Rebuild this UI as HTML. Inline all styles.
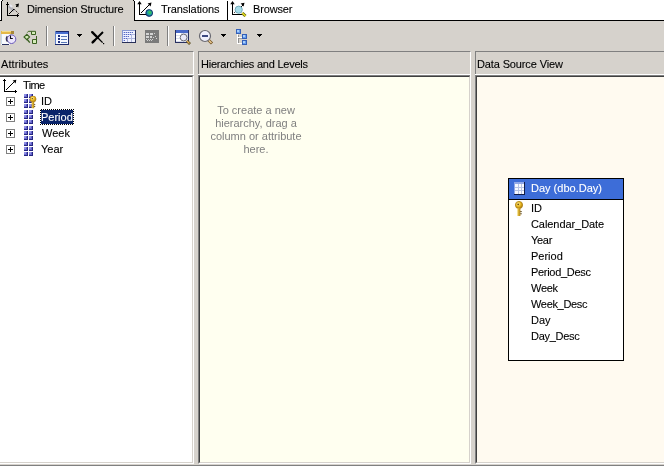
<!DOCTYPE html>
<html><head><meta charset="utf-8">
<style>
*{margin:0;padding:0;box-sizing:border-box}
html,body{width:664px;height:466px;overflow:hidden;background:#d6d2cc;font-family:"Liberation Sans",sans-serif;font-size:11px;color:#000}
.a{position:absolute}
.t{position:absolute;white-space:nowrap;line-height:16px;height:16px;will-change:transform;-webkit-text-stroke:0.1px currentColor}
svg{position:absolute;overflow:visible}
</style></head><body>
<!-- tab strip -->
<div class="a" style="left:0;top:0;width:664px;height:20px;background:#fff"></div>
<div class="a" style="left:0;top:20px;width:664px;height:1px;background:#000"></div>
<div class="a" style="left:1px;top:0;width:133px;height:21px;background:#d6d2cc;border-left:1px solid #000"></div>
<div class="a" style="left:1px;top:0;width:1px;height:1px;background:#fff"></div><div class="a" style="left:2px;top:0;width:1px;height:1px;background:#000"></div>
<div class="a" style="left:133px;top:0;width:1px;height:1px;background:#000"></div>
<div class="a" style="left:134px;top:1px;width:1px;height:20px;background:#000"></div>
<div class="a" style="left:227px;top:1px;width:1px;height:20px;background:#000"></div>
<div class="t" style="left:27px;top:1px;letter-spacing:-0.17px">Dimension Structure</div>
<div class="t" style="left:161px;top:1px;letter-spacing:-0.09px">Translations</div>
<div class="t" style="left:253px;top:1px;letter-spacing:-0.15px">Browser</div>

<!-- toolbar -->
<div class="a" style="left:0;top:21px;width:664px;height:30px;background:#d6d2cc"></div>
<div class="a" style="left:46px;top:26px;width:1px;height:20px;background:#808080;box-shadow:1px 0 0 #fff"></div>
<div class="a" style="left:113px;top:26px;width:1px;height:20px;background:#808080;box-shadow:1px 0 0 #fff"></div>
<div class="a" style="left:167px;top:26px;width:1px;height:20px;background:#808080;box-shadow:1px 0 0 #fff"></div>

<!-- panels -->
<!-- Attributes -->
<div class="a" style="left:-2px;top:51px;width:196px;height:413px;border-top:1px solid #808080;border-right:1px solid #fff;background:#d6d2cc"></div>
<div class="t" style="left:1px;top:56px;letter-spacing:0.1px">Attributes</div>
<div class="a" style="left:-2px;top:74px;width:195px;height:1px;background:#fff"></div>
<div class="a" style="left:-2px;top:75px;width:196px;height:389px;border-top:1px solid #808080;border-bottom:1px solid #fff;border-right:1px solid #fff;background:#d6d2cc"></div>
<div class="a" style="left:-2px;top:76px;width:195px;height:387px;border-top:1px solid #404040;border-bottom:1px solid #d6d2cc;border-right:1px solid #d6d2cc;background:#fff"></div>

<!-- Hierarchies -->
<div class="a" style="left:198px;top:51px;width:273px;height:413px;border-top:1px solid #808080;border-left:1px solid #808080;border-right:1px solid #fff;background:#d6d2cc"></div>
<div class="t" style="left:201px;top:56px;letter-spacing:-0.23px">Hierarchies and Levels</div>
<div class="a" style="left:198px;top:74px;width:272px;height:1px;background:#fff"></div>
<div class="a" style="left:198px;top:75px;width:272px;height:389px;border-top:1px solid #808080;border-left:1px solid #808080;border-bottom:1px solid #fff;background:#d6d2cc"></div>
<div class="a" style="left:199px;top:76px;width:271px;height:387px;border-top:1px solid #404040;border-left:1px solid #404040;border-bottom:1px solid #d6d2cc;border-right:1px solid #d6d2cc;background:#fffff0"></div>

<!-- DSV -->
<div class="a" style="left:475px;top:51px;width:200px;height:413px;border-top:1px solid #808080;border-left:1px solid #808080;background:#d6d2cc"></div>
<div class="t" style="left:477px;top:56px;letter-spacing:-0.13px">Data Source View</div>
<div class="a" style="left:475px;top:74px;width:200px;height:1px;background:#fff"></div>
<div class="a" style="left:475px;top:75px;width:200px;height:389px;border-top:1px solid #808080;border-left:1px solid #808080;border-bottom:1px solid #fff;background:#d6d2cc"></div>
<div class="a" style="left:476px;top:76px;width:200px;height:387px;border-top:1px solid #404040;border-left:1px solid #404040;border-bottom:1px solid #d6d2cc;background:#fffaf0"></div>

<div class="a" style="left:0;top:464px;width:664px;height:1px;background:#d6d2cc"></div>
<div class="a" style="left:0;top:465px;width:664px;height:1px;background:#808080"></div>
<!-- attributes tree -->
<div class="t" style="left:23px;top:77px;letter-spacing:-0.6px">Time</div>
<div class="t" style="left:41px;top:93px">ID</div>
<div class="a" style="left:40px;top:109px;width:34px;height:16px;background:repeating-conic-gradient(#000 0 25%,#fff 0 50%) 0 0/2px 2px"></div><div class="a" style="left:41px;top:110px;width:32px;height:14px;background:#0a246a"></div>
<div class="t" style="left:41px;top:109px;color:#fff">Period</div>
<div class="t" style="left:42px;top:125px">Week</div>
<div class="t" style="left:41px;top:141px">Year</div>

<!-- hint -->
<div class="a" style="left:206px;top:104px;width:100px;text-align:center;line-height:13px;color:#808080;will-change:transform">To create a new hierarchy, drag a column or attribute here.</div>

<!-- DSV table -->
<div class="a" style="left:508px;top:178px;width:116px;height:183px;border:1px solid #000;background:#fff"></div>
<div class="a" style="left:509px;top:179px;width:114px;height:21px;background:#3d6dd8;border-bottom:1px solid #000"></div>
<div class="t" style="left:531px;top:180px;color:#fff">Day (dbo.Day)</div>
<div class="t" style="left:531px;top:200px">ID</div>
<div class="t" style="left:531px;top:216px;letter-spacing:-0.07px">Calendar_Date</div>
<div class="t" style="left:531px;top:232px;letter-spacing:-0.3px">Year</div>
<div class="t" style="left:531px;top:248px">Period</div>
<div class="t" style="left:531px;top:264px;letter-spacing:-0.3px">Period_Desc</div>
<div class="t" style="left:531px;top:280px;letter-spacing:-0.3px">Week</div>
<div class="t" style="left:531px;top:296px;letter-spacing:-0.33px">Week_Desc</div>
<div class="t" style="left:531px;top:312px">Day</div>
<div class="t" style="left:531px;top:328px;letter-spacing:-0.28px">Day_Desc</div>
<svg class="a" style="left:0;top:0" width="664" height="466" viewBox="0 0 664 466">
<defs>
<linearGradient id="sq" x1="0" y1="0" x2="1" y2="1"><stop offset="0" stop-color="#a0a0f0"/><stop offset="0.5" stop-color="#5858c8"/><stop offset="1" stop-color="#2c2c90"/></linearGradient>
<radialGradient id="gold" cx="0.4" cy="0.35" r="0.7"><stop offset="0" stop-color="#fff0a0"/><stop offset="0.5" stop-color="#e8b820"/><stop offset="1" stop-color="#a07010"/></radialGradient>
<linearGradient id="goldl" x1="0" y1="0" x2="1" y2="0"><stop offset="0" stop-color="#f0d050"/><stop offset="1" stop-color="#b08010"/></linearGradient>
<radialGradient id="globe" cx="0.6" cy="0.4" r="0.7"><stop offset="0" stop-color="#40d040"/><stop offset="0.5" stop-color="#20a0a0"/><stop offset="1" stop-color="#104080"/></radialGradient>
<linearGradient id="hsq" x1="0" y1="0" x2="1" y2="1"><stop offset="0" stop-color="#c0e0ff"/><stop offset="0.5" stop-color="#6898e8"/><stop offset="1" stop-color="#2850b0"/></linearGradient>
<symbol id="attr" viewBox="0 0 9 14" shape-rendering="crispEdges"><rect x="0" y="0" width="4" height="4" fill="#262680"/><rect x="0" y="0" width="3" height="3" fill="#6a6ad0"/><rect x="0" y="0" width="2" height="2" fill="#9090e4"/><rect x="2" y="1" width="1" height="1" fill="#5858c0"/><rect x="5" y="0" width="4" height="4" fill="#262680"/><rect x="5" y="0" width="3" height="3" fill="#6a6ad0"/><rect x="5" y="0" width="2" height="2" fill="#9090e4"/><rect x="7" y="1" width="1" height="1" fill="#5858c0"/><rect x="0" y="5" width="4" height="4" fill="#262680"/><rect x="0" y="5" width="3" height="3" fill="#6a6ad0"/><rect x="0" y="5" width="2" height="2" fill="#9090e4"/><rect x="2" y="6" width="1" height="1" fill="#5858c0"/><rect x="5" y="5" width="4" height="4" fill="#262680"/><rect x="5" y="5" width="3" height="3" fill="#6a6ad0"/><rect x="5" y="5" width="2" height="2" fill="#9090e4"/><rect x="7" y="6" width="1" height="1" fill="#5858c0"/><rect x="0" y="10" width="4" height="4" fill="#262680"/><rect x="0" y="10" width="3" height="3" fill="#6a6ad0"/><rect x="0" y="10" width="2" height="2" fill="#9090e4"/><rect x="2" y="11" width="1" height="1" fill="#5858c0"/><rect x="5" y="10" width="4" height="4" fill="#262680"/><rect x="5" y="10" width="3" height="3" fill="#6a6ad0"/><rect x="5" y="10" width="2" height="2" fill="#9090e4"/><rect x="7" y="11" width="1" height="1" fill="#5858c0"/></symbol>
<symbol id="plus" viewBox="0 0 9 9"><rect x="0.5" y="0.5" width="8" height="8" fill="#fff" stroke="#808080"/><rect x="2" y="4" width="5" height="1" fill="#000"/><rect x="4" y="2" width="1" height="5" fill="#000"/></symbol>
<symbol id="key" viewBox="0 0 10 16"><circle cx="5" cy="4" r="3.6" fill="url(#gold)" stroke="#b08010" stroke-width="0.8"/><circle cx="4.2" cy="3.4" r="0.8" fill="#604000"/><path d="M3.4 7.2 L6.4 7.2 L6.4 15 L3.4 15 Z" fill="url(#goldl)"/><rect x="6.4" y="10" width="1.2" height="1.1" fill="#483000"/><rect x="6.4" y="12.2" width="1.2" height="1.1" fill="#483000"/></symbol>
</defs>

<!-- tab icon 1: dimension structure -->
<g shape-rendering="crispEdges">
<rect x="7" y="2" width="1" height="14" fill="#000"/>
<rect x="6" y="4" width="3" height="1" fill="#000"/>
<rect x="7" y="15" width="12" height="1" fill="#000"/>
<rect x="17" y="14" width="1" height="3" fill="#000"/>
</g>
<path d="M9 6 L14 11" stroke="#b0b0b8" stroke-width="2.5"/>
<path d="M10 5 L12 7" stroke="#e8e8f0" stroke-width="2"/>
<g fill="#000" shape-rendering="crispEdges"><rect x="9" y="13" width="1" height="1"/><rect x="10" y="12" width="1" height="1"/><rect x="11" y="11" width="1" height="1"/><rect x="12" y="10" width="1" height="1"/><rect x="13" y="9" width="1" height="1"/></g>
<g fill="#484040" shape-rendering="crispEdges"><rect x="14" y="9" width="1" height="1"/><rect x="16" y="11" width="1" height="1"/><rect x="18" y="13" width="1" height="1"/></g><g fill="#a09890" shape-rendering="crispEdges"><rect x="15" y="10" width="1" height="1"/><rect x="17" y="12" width="1" height="1"/></g>
<path d="M19 3.6 L15.3 4.6 L18.2 7.5 Z" fill="#000"/>
<rect x="16" y="6" width="1" height="1" fill="#000" shape-rendering="crispEdges"/>

<!-- tab icon 2: translations -->
<g shape-rendering="crispEdges">
<rect x="139" y="3" width="1" height="12" fill="#000"/>
<rect x="139" y="14" width="7" height="1" fill="#000"/>
</g>
<path d="M139.5 1 L137.3 4.2 L141.7 4.2 Z" fill="#000"/>
<g fill="#000" shape-rendering="crispEdges"><rect x="141" y="12" width="1" height="1"/><rect x="142" y="11" width="1" height="1"/><rect x="143" y="10" width="1" height="1"/><rect x="144" y="9" width="1" height="1"/><rect x="145" y="8" width="1" height="1"/><rect x="146" y="7" width="1" height="1"/><rect x="147" y="6" width="1" height="1"/><rect x="148" y="5" width="1" height="1"/></g>
<path d="M151.5 2.5 L147.6 3.4 L150.6 6.4 Z" fill="#000"/>
<circle cx="149.2" cy="13" r="3.4" fill="url(#globe)" stroke="#0c2c6c" stroke-width="0.9"/>

<!-- tab icon 3: browser -->
<g shape-rendering="crispEdges">
<rect x="232" y="3" width="1" height="12" fill="#000"/>
<rect x="232" y="14" width="10" height="1" fill="#000"/>
</g>
<path d="M232.5 1 L230.3 4.2 L234.7 4.2 Z" fill="#000"/>
<path d="M234 13 L236 11" stroke="#000" stroke-width="1" stroke-dasharray="1 1"/>
<path d="M244.5 2.8 L240.6 3.6 L243.6 6.6 Z" fill="#000"/>
<path d="M242.3 13 L245.5 16" stroke="#606000" stroke-width="3"/>
<path d="M242.3 13 L245.5 16" stroke="#e8e020" stroke-width="1.5"/>
<path d="M241 7 L243 5" stroke="#000" stroke-width="1"/>
<circle cx="238.7" cy="9.7" r="3.6" fill="#a8dce8" stroke="#6ca4b4" stroke-width="0.9"/>

<!-- toolbar icon: calendar+clock -->
<g shape-rendering="crispEdges">
<rect x="1" y="31" width="13" height="3" fill="#e4b848"/>
<rect x="2" y="31" width="9" height="1" fill="#f4dc88"/>
<rect x="11" y="31" width="3" height="3" fill="#a88838"/>
<rect x="1" y="34" width="9" height="11" fill="#f8fafc"/>
<rect x="1" y="34" width="1" height="10" fill="#c8d8e8"/>
<rect x="2" y="44" width="7" height="1" fill="#283060"/>
</g>
<circle cx="11.5" cy="39.2" r="4.3" fill="#ece6fc" stroke="#6858b8" stroke-width="1"/>
<path d="M7.3 36.2 A4.3 4.3 0 0 0 7.4 41.6" stroke="#383850" stroke-width="1.2" fill="none"/>
<path d="M10.5 35.5 V38.5 H12.8" stroke="#101018" stroke-width="1.1" fill="none"/>
<!-- toolbar icon: refresh green -->
<g stroke="#3a6020" stroke-width="1">
<path d="M27.3 32.6 L28.4 31.3 H35.5 V34.5 H31.5 V31.5" fill="#d4ecb8"/>
<path d="M26.8 34.3 L24 37 L26.8 39.7 L29.6 37 Z" fill="#d4ecb8" stroke-width="1.1"/>
<path d="M26.8 39 L29.8 42.6" stroke-width="1.4" fill="none"/>
<path d="M36.5 36 V43.5 H32.5 V39.5 H36.5" fill="#d4ecb8"/>
</g>
<!-- list icon -->
<g shape-rendering="crispEdges">
<rect x="55" y="31" width="14" height="14" fill="#1c2a6c"/>
<rect x="55" y="31" width="1" height="13" fill="#6080c8"/>
<rect x="56" y="32" width="12" height="2" fill="#4a70d0"/>
<rect x="56" y="34" width="12" height="10" fill="#f4f8ff"/>
<rect x="58" y="35" width="2" height="2" fill="#203080"/>
<rect x="58" y="38" width="2" height="2" fill="#203080"/>
<rect x="58" y="41" width="2" height="2" fill="#203080"/>
<rect x="61" y="36" width="6" height="1" fill="#5878b8"/>
<rect x="61" y="39" width="6" height="1" fill="#5878b8"/>
<rect x="61" y="42" width="6" height="1" fill="#5878b8"/>
</g>
<!-- dropdown arrows -->
<g shape-rendering="crispEdges" fill="#000">
<rect x="77" y="34" width="5" height="1"/><rect x="78" y="35" width="3" height="1"/><rect x="79" y="36" width="1" height="1"/>
<rect x="221" y="34" width="5" height="1"/><rect x="222" y="35" width="3" height="1"/><rect x="223" y="36" width="1" height="1"/>
<rect x="257" y="34" width="5" height="1"/><rect x="258" y="35" width="3" height="1"/><rect x="259" y="36" width="1" height="1"/>
</g>
<!-- X delete -->
<path d="M92.2 32.2 L98 38" stroke="#000" stroke-width="2.4" stroke-linecap="round"/>
<path d="M98 38 L102.6 42.6" stroke="#000" stroke-width="1.3"/>
<rect x="103" y="43" width="1.2" height="1.2" fill="#000"/>
<path d="M103 32 L93 42" stroke="#000" stroke-width="1.9"/>
<path d="M94.5 40.5 L92.6 42.4" stroke="#000" stroke-width="2.4" stroke-linecap="round"/>
<!-- grid icon (blue) -->
<g shape-rendering="crispEdges">
<rect x="122" y="30" width="14" height="13" fill="#283058"/>
<rect x="122" y="30" width="13" height="12" fill="#8898d0"/>
<rect x="123" y="31" width="12" height="11" fill="#f0f2ff"/>
<rect x="123" y="32" width="1" height="1" fill="#b8c4f0"/>
<rect x="124" y="32" width="1" height="1" fill="#5868c0"/>
<rect x="125" y="32" width="1" height="1" fill="#b8c4f0"/>
<rect x="126" y="32" width="1" height="1" fill="#5868c0"/>
<rect x="127" y="32" width="1" height="1" fill="#b8c4f0"/>
<rect x="128" y="32" width="1" height="1" fill="#5868c0"/>
<rect x="129" y="32" width="1" height="1" fill="#b8c4f0"/>
<rect x="130" y="32" width="1" height="1" fill="#5868c0"/>
<rect x="131" y="32" width="1" height="1" fill="#b8c4f0"/>
<rect x="132" y="32" width="1" height="1" fill="#5868c0"/>
<rect x="123" y="34" width="1" height="1" fill="#b8c4f0"/>
<rect x="124" y="34" width="1" height="1" fill="#5868c0"/>
<rect x="125" y="34" width="1" height="1" fill="#b8c4f0"/>
<rect x="126" y="34" width="1" height="1" fill="#5868c0"/>
<rect x="127" y="34" width="1" height="1" fill="#b8c4f0"/>
<rect x="128" y="34" width="1" height="1" fill="#5868c0"/>
<rect x="129" y="34" width="1" height="1" fill="#b8c4f0"/>
<rect x="130" y="34" width="1" height="1" fill="#5868c0"/>
<rect x="131" y="34" width="1" height="1" fill="#b0b8e0"/>
<rect x="132" y="34" width="1" height="1" fill="#b0b8e0"/>
<rect x="133" y="34" width="1" height="1" fill="#b0b8e0"/>
<rect x="134" y="34" width="1" height="1" fill="#b0b8e0"/>
<rect x="131" y="35" width="1" height="1" fill="#b0b8e0"/>
<rect x="123" y="36" width="1" height="1" fill="#b8c4f0"/>
<rect x="124" y="36" width="1" height="1" fill="#5868c0"/>
<rect x="125" y="36" width="1" height="1" fill="#b8c4f0"/>
<rect x="126" y="36" width="1" height="1" fill="#5868c0"/>
<rect x="127" y="36" width="1" height="1" fill="#b8c4f0"/>
<rect x="128" y="36" width="1" height="1" fill="#5868c0"/>
<rect x="131" y="36" width="1" height="1" fill="#b0b8e0"/>
<rect x="131" y="37" width="1" height="1" fill="#b0b8e0"/>
<rect x="123" y="38" width="1" height="1" fill="#b8c4f0"/>
<rect x="124" y="38" width="1" height="1" fill="#5868c0"/>
<rect x="125" y="38" width="1" height="1" fill="#b8c4f0"/>
<rect x="126" y="38" width="1" height="1" fill="#5868c0"/>
<rect x="127" y="38" width="1" height="1" fill="#b0b8e0"/>
<rect x="128" y="38" width="1" height="1" fill="#b0b8e0"/>
<rect x="129" y="38" width="1" height="1" fill="#b0b8e0"/>
<rect x="130" y="38" width="1" height="1" fill="#b0b8e0"/>
<rect x="131" y="38" width="1" height="1" fill="#b0b8e0"/>
<rect x="132" y="38" width="1" height="1" fill="#b0b8e0"/>
<rect x="133" y="38" width="1" height="1" fill="#b0b8e0"/>
<rect x="134" y="38" width="1" height="1" fill="#b0b8e0"/>
<rect x="127" y="39" width="1" height="1" fill="#b0b8e0"/>
<rect x="131" y="39" width="1" height="1" fill="#b0b8e0"/>
<rect x="123" y="40" width="1" height="1" fill="#b8c4f0"/>
<rect x="124" y="40" width="1" height="1" fill="#5868c0"/>
<rect x="127" y="40" width="1" height="1" fill="#b0b8e0"/>
<rect x="131" y="40" width="1" height="1" fill="#b0b8e0"/>
<rect x="127" y="41" width="1" height="1" fill="#b0b8e0"/>
<rect x="131" y="41" width="1" height="1" fill="#b0b8e0"/>
</g>
<!-- grid icon (gray, disabled) -->
<g shape-rendering="crispEdges">
<rect x="145" y="30" width="14" height="13" fill="#7a7a7a"/>
<rect x="146" y="33" width="3" height="2" fill="#d4d4d4"/>
<rect x="150" y="33" width="3" height="2" fill="#d4d4d4"/>
<rect x="146" y="36" width="3" height="2" fill="#d4d4d4"/>
<rect x="150" y="36" width="2" height="2" fill="#d4d4d4"/>
<rect x="146" y="39" width="1" height="1" fill="#d0d0d0"/>
<rect x="148" y="39" width="1" height="1" fill="#d0d0d0"/>
<rect x="147" y="40" width="1" height="1" fill="#d0d0d0"/>
<rect x="149" y="40" width="1" height="1" fill="#d0d0d0"/>
<rect x="150" y="39" width="1" height="1" fill="#d0d0d0"/>
<rect x="152" y="39" width="1" height="1" fill="#d0d0d0"/>
<rect x="151" y="40" width="1" height="1" fill="#d0d0d0"/>
<rect x="154" y="33" width="1" height="1" fill="#d0d0d0"/>
<rect x="155" y="36" width="1" height="1" fill="#d0d0d0"/>
<rect x="153" y="37" width="1" height="1" fill="#d0d0d0"/>
<rect x="156" y="38" width="1" height="1" fill="#d0d0d0"/>
</g>
<!-- table zoom icon -->
<g shape-rendering="crispEdges">
<rect x="175" y="30" width="14" height="13" fill="#283060"/>
<rect x="176" y="30" width="12" height="3" fill="#4868c8"/>
<rect x="176" y="33" width="12" height="9" fill="#d8dcec"/>
<rect x="176" y="33" width="5" height="2" fill="#fff"/>
<rect x="176" y="36" width="5" height="2" fill="#fff"/>
<rect x="176" y="39" width="5" height="2" fill="#fff"/>
</g>
<path d="M186.8 40.8 L190 44" stroke="#504010" stroke-width="2.6"/>
<path d="M186.8 40.8 L189.5 43.5" stroke="#e0b060" stroke-width="1.3"/>
<circle cx="183.6" cy="37.5" r="3.4" fill="#e8e8f8" stroke="#707078" stroke-width="1"/>

<!-- zoom out icon -->
<path d="M208.5 40 L212 43.5" stroke="#705020" stroke-width="3"/>
<path d="M208.5 40 L211.5 43" stroke="#e8c890" stroke-width="1.6"/>
<circle cx="205" cy="36" r="5.5" fill="#f0f0fc" stroke="#686870" stroke-width="1.2"/>
<rect x="202" y="35" width="6" height="2" fill="#3c4880" shape-rendering="crispEdges"/>

<!-- hierarchy icon -->
<g shape-rendering="crispEdges">
<rect x="237" y="34" width="1" height="10" fill="#ffffff"/>
<rect x="238" y="35" width="1" height="9" fill="#909090"/>
<rect x="238" y="37" width="4" height="1" fill="#ffffff"/>
<rect x="239" y="38" width="3" height="1" fill="#a0a0a0"/>
<rect x="238" y="43" width="4" height="1" fill="#ffffff"/>
<rect x="236" y="29" width="5" height="5" fill="#3460b8"/><rect x="237" y="30" width="3" height="3" fill="#6ca0ec"/><rect x="237" y="30" width="2" height="2" fill="#a8d0fc"/>
<rect x="242" y="34" width="5" height="5" fill="#3460b8"/><rect x="243" y="35" width="3" height="3" fill="#6ca0ec"/><rect x="243" y="35" width="2" height="2" fill="#a8d0fc"/>
<rect x="242" y="40" width="5" height="5" fill="#3460b8"/><rect x="243" y="41" width="3" height="3" fill="#6ca0ec"/><rect x="243" y="41" width="2" height="2" fill="#a8d0fc"/>
</g>

<!-- tree: time icon -->
<g shape-rendering="crispEdges" fill="#000">
<rect x="4" y="79" width="1" height="13"/>
<rect x="3" y="80" width="3" height="1"/>
<rect x="4" y="91" width="13" height="1"/>
<rect x="15" y="90" width="1" height="3"/>
</g>
<g fill="#000" shape-rendering="crispEdges"><rect x="6" y="89" width="1" height="1"/><rect x="7" y="88" width="1" height="1"/><rect x="8" y="87" width="1" height="1"/><rect x="9" y="86" width="1" height="1"/><rect x="10" y="85" width="1" height="1"/><rect x="11" y="84" width="1" height="1"/><rect x="12" y="83" width="1" height="1"/><rect x="13" y="82" width="1" height="1"/></g>
<path d="M16.3 79.7 L12.6 80.4 L15.6 83.4 Z" fill="#000"/>

<!-- plus boxes -->
<use href="#plus" x="6" y="97" width="9" height="9"/>
<use href="#plus" x="6" y="113" width="9" height="9"/>
<use href="#plus" x="6" y="129" width="9" height="9"/>
<use href="#plus" x="6" y="145" width="9" height="9"/>
<!-- attribute icons -->
<use href="#attr" x="24" y="94" width="9" height="14"/>
<use href="#attr" x="24" y="110" width="9" height="14"/>
<use href="#attr" x="24" y="126" width="9" height="14"/>
<use href="#attr" x="24" y="142" width="9" height="14"/>
<use href="#key" x="28.5" y="95.7" width="9" height="13.5"/>


<!-- DSV table icon -->
<g shape-rendering="crispEdges">
<rect x="514" y="182" width="11" height="13" fill="#101c48"/>
<rect x="514" y="182" width="10" height="12" fill="#90a8e8"/>
<rect x="515" y="184" width="9" height="10" fill="#f8faff"/>
<g fill="#b8c4e4"><rect x="515" y="187" width="9" height="1"/><rect x="515" y="190" width="9" height="1"/><rect x="518" y="184" width="1" height="10"/><rect x="521" y="184" width="1" height="10"/></g>
</g>
<use href="#key" x="514" y="201" width="10" height="16"/>
</svg>
</body></html>
